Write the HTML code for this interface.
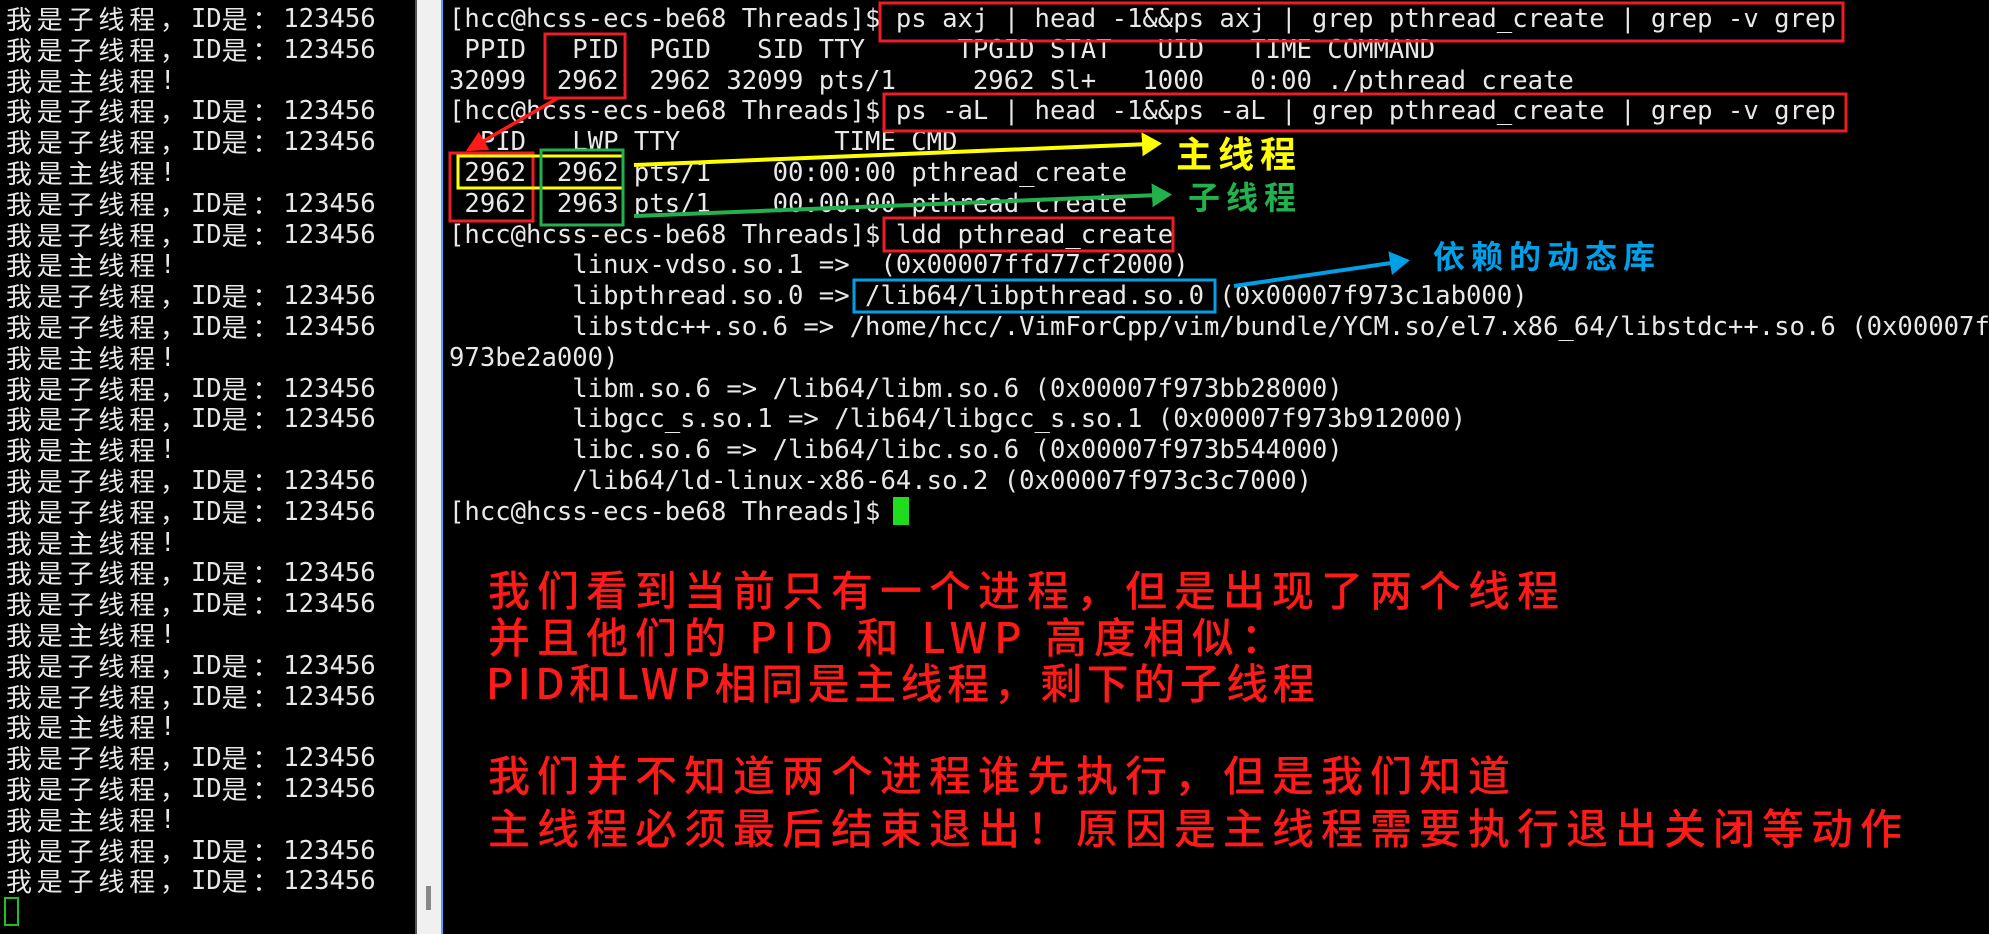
<!DOCTYPE html>
<html><head><meta charset="utf-8"><style>
body{margin:0;width:1989px;height:934px;background:#000;overflow:hidden;position:relative;font-family:"DejaVu Sans Mono","Liberation Mono","Noto Sans CJK SC",monospace;}
.term{position:absolute;color:#e8e8e8;font-size:25.6px;line-height:30.8px;white-space:pre;}
#left{left:6px;top:4px;white-space:normal;}
#left div{height:30.8px;white-space:pre;}
.c{font-family:"Noto Sans CJK SC",sans-serif;font-size:26px;letter-spacing:4.8px;line-height:30.8px;vertical-align:top;}
#right{left:449px;top:4px;}
.sb{position:absolute;left:415px;top:0;width:26px;height:934px;background:#f0f0f0;border-left:2px solid #555;}
.sb2{position:absolute;left:441px;top:0;width:2px;height:934px;background:#4aa3ff;}
.thumb{position:absolute;left:426px;top:886px;width:5px;height:24px;background:#888;}
.ann{position:absolute;color:#ff1a1a;font-family:"Noto Sans CJK SC",sans-serif;font-weight:500;font-size:42px;letter-spacing:7px;white-space:pre;line-height:46px;}
.lab{position:absolute;font-family:"Noto Sans CJK SC",sans-serif;font-weight:700;white-space:pre;}
</style></head><body>
<div class="term" id="left"><div><span class="c">我是子线程，</span>ID<span class="c">是：</span>123456</div><div><span class="c">我是子线程，</span>ID<span class="c">是：</span>123456</div><div><span class="c">我是主线程</span>!</div><div><span class="c">我是子线程，</span>ID<span class="c">是：</span>123456</div><div><span class="c">我是子线程，</span>ID<span class="c">是：</span>123456</div><div><span class="c">我是主线程</span>!</div><div><span class="c">我是子线程，</span>ID<span class="c">是：</span>123456</div><div><span class="c">我是子线程，</span>ID<span class="c">是：</span>123456</div><div><span class="c">我是主线程</span>!</div><div><span class="c">我是子线程，</span>ID<span class="c">是：</span>123456</div><div><span class="c">我是子线程，</span>ID<span class="c">是：</span>123456</div><div><span class="c">我是主线程</span>!</div><div><span class="c">我是子线程，</span>ID<span class="c">是：</span>123456</div><div><span class="c">我是子线程，</span>ID<span class="c">是：</span>123456</div><div><span class="c">我是主线程</span>!</div><div><span class="c">我是子线程，</span>ID<span class="c">是：</span>123456</div><div><span class="c">我是子线程，</span>ID<span class="c">是：</span>123456</div><div><span class="c">我是主线程</span>!</div><div><span class="c">我是子线程，</span>ID<span class="c">是：</span>123456</div><div><span class="c">我是子线程，</span>ID<span class="c">是：</span>123456</div><div><span class="c">我是主线程</span>!</div><div><span class="c">我是子线程，</span>ID<span class="c">是：</span>123456</div><div><span class="c">我是子线程，</span>ID<span class="c">是：</span>123456</div><div><span class="c">我是主线程</span>!</div><div><span class="c">我是子线程，</span>ID<span class="c">是：</span>123456</div><div><span class="c">我是子线程，</span>ID<span class="c">是：</span>123456</div><div><span class="c">我是主线程</span>!</div><div><span class="c">我是子线程，</span>ID<span class="c">是：</span>123456</div><div><span class="c">我是子线程，</span>ID<span class="c">是：</span>123456</div></div>
<div style="position:absolute;left:4px;top:897px;width:11px;height:25px;border:2px solid #1fbf1f;"></div>
<div class="sb"></div><div class="sb2"></div><div class="thumb"></div>
<div class="term" id="right">[hcc@hcss-ecs-be68 Threads]$ ps axj | head -1&amp;&amp;ps axj | grep pthread_create | grep -v grep
 PPID   PID  PGID   SID TTY      TPGID STAT   UID   TIME COMMAND
32099  2962  2962 32099 pts/1     2962 Sl+   1000   0:00 ./pthread_create
[hcc@hcss-ecs-be68 Threads]$ ps -aL | head -1&amp;&amp;ps -aL | grep pthread_create | grep -v grep
  PID   LWP TTY          TIME CMD
 2962  2962 pts/1    00:00:00 pthread_create
 2962  2963 pts/1    00:00:00 pthread_create
[hcc@hcss-ecs-be68 Threads]$ ldd pthread_create
        linux-vdso.so.1 =>  (0x00007ffd77cf2000)
        libpthread.so.0 => /lib64/libpthread.so.0 (0x00007f973c1ab000)
        libstdc++.so.6 => /home/hcc/.VimForCpp/vim/bundle/YCM.so/el7.x86_64/libstdc++.so.6 (0x00007f
973be2a000)
        libm.so.6 => /lib64/libm.so.6 (0x00007f973bb28000)
        libgcc_s.so.1 => /lib64/libgcc_s.so.1 (0x00007f973b912000)
        libc.so.6 => /lib64/libc.so.6 (0x00007f973b544000)
        /lib64/ld-linux-x86-64.so.2 (0x00007f973c3c7000)
[hcc@hcss-ecs-be68 Threads]$ </div>
<div style="position:absolute;left:893px;top:497px;width:16px;height:28px;background:#1fdc1f;"></div>
<svg style="position:absolute;left:0;top:0" width="1989" height="934">
<defs>
<marker id="ar" markerWidth="6" markerHeight="6" refX="3" refY="3" orient="auto" markerUnits="strokeWidth"><path d="M0,0L6,3L0,6z" fill="#ff1a1a"/></marker>
<marker id="ay" markerWidth="5" markerHeight="6" refX="2" refY="3" orient="auto" markerUnits="strokeWidth"><path d="M0,0L5,3L0,6z" fill="#ffff00"/></marker>
<marker id="ag" markerWidth="5" markerHeight="6" refX="2" refY="3" orient="auto" markerUnits="strokeWidth"><path d="M0,0L5,3L0,6z" fill="#22b14c"/></marker>
<marker id="ab" markerWidth="5" markerHeight="6" refX="2" refY="3" orient="auto" markerUnits="strokeWidth"><path d="M0,0L5,3L0,6z" fill="#00a0e9"/></marker>
</defs>
<g fill="none" stroke-width="3">
<rect x="880" y="3" width="963" height="38" stroke="#ee1c24"/>
<rect x="545" y="34" width="80" height="64" stroke="#ee1c24"/>
<rect x="884" y="94" width="962" height="37" stroke="#ee1c24"/>
<rect x="450" y="153" width="83" height="68" stroke="#ee1c24"/>
<rect x="458" y="156" width="165" height="32" stroke="#ffff00"/>
<rect x="541" y="150" width="82" height="75" stroke="#22b14c"/>
<rect x="884" y="218" width="289" height="33" stroke="#ee1c24"/>
<rect x="854" y="280" width="361" height="32" stroke="#00a0e9"/>
<line x1="558" y1="98" x2="475" y2="146" stroke="#ff1a1a" stroke-width="3.5" marker-end="url(#ar)"/>
<line x1="634" y1="165" x2="1150" y2="144" stroke="#ffff00" stroke-width="4" marker-end="url(#ay)"/>
<line x1="634" y1="216" x2="1160" y2="195" stroke="#22b14c" stroke-width="4" marker-end="url(#ag)"/>
<line x1="1234" y1="286" x2="1398" y2="262" stroke="#00a0e9" stroke-width="4" marker-end="url(#ab)"/>
</g>
</svg>
<div class="lab" style="left:1176px;top:126px;font-size:36px;letter-spacing:6px;color:#ffff00;">主线程</div>
<div class="lab" style="left:1188px;top:173px;font-size:32px;letter-spacing:6px;color:#22b14c;">子线程</div>
<div class="lab" style="left:1433px;top:232px;font-size:32px;letter-spacing:6px;color:#00a0e9;">依赖的动态库</div>
<div class="ann" style="left:488px;top:566px;">我们看到当前只有一个进程，但是出现了两个线程</div>
<div class="ann" style="left:488px;top:613px;">并且他们的 PID 和 LWP 高度相似：</div>
<div class="ann" style="left:486px;top:659px;letter-spacing:4.5px;">PID和LWP相同是主线程，剩下的子线程</div>
<div class="ann" style="left:488px;top:751px;">我们并不知道两个进程谁先执行，但是我们知道</div>
<div class="ann" style="left:488px;top:804px;">主线程必须最后结束退出！原因是主线程需要执行退出关闭等动作</div>
</body></html>
